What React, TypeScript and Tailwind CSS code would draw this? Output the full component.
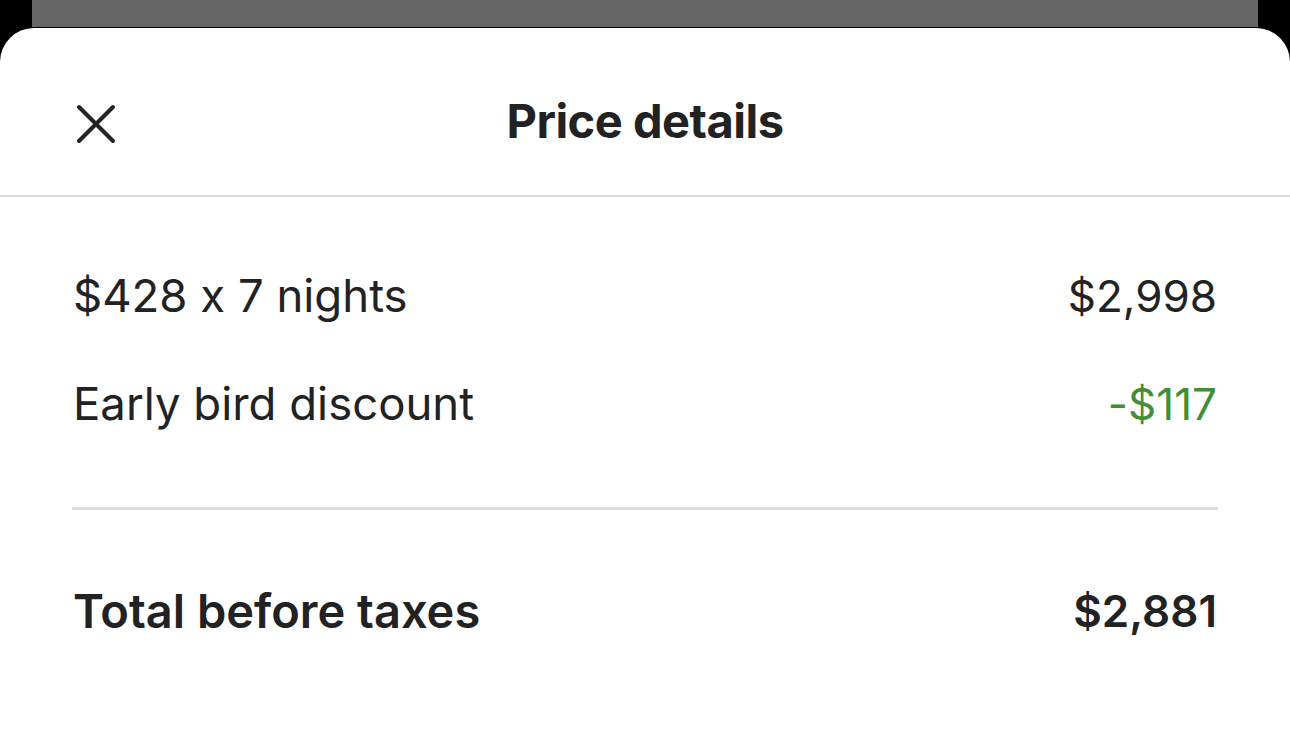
import React from "react";

export default function App() {
  return (
    <div
      className="h-[738px] w-[1290px] bg-black overflow-hidden flex flex-col text-[#222222] [font-feature-settings:'calt'_0]"
      style={{ fontFamily: 'Inter, "Noto Sans", sans-serif' }}
    >
      <div className="mx-[32px] h-[27px] shrink-0 bg-[#666666]" />
      <div className="mt-px flex-1 bg-white rounded-t-[34px] flex flex-col">
        <div className="relative h-[169px] shrink-0 border-b-2 border-[#dddddd] flex items-center justify-center pt-[20px]">
          <button className="absolute left-[76px] top-[76px] w-[40px] h-[40px] flex items-center justify-center">
            <svg width="40" height="40" viewBox="0 0 40 40" fill="none">
              <path d="M3 3L37 37M37 3L3 37" stroke="#222222" strokeWidth="4" strokeLinecap="round" />
            </svg>
          </button>
          <h1 className="text-[47px] font-bold tracking-[-0.5px]">Price details</h1>
        </div>
        <div className="px-[73px] pt-[45px] flex flex-col">
          <div className="h-[108px] flex items-center justify-between text-[45.5px]">
            <span>$428 x 7 nights</span>
            <span className="text-[44px]">$2,998</span>
          </div>
          <div className="h-[108px] flex items-center justify-between text-[45.5px]">
            <span>Early bird discount</span>
            <span className="text-[44px] text-[#3f8f37]">-$117</span>
          </div>
          <div className="mt-[49px] h-[3px] bg-[#dddddd] -mx-px" />
          <div className="mt-[47px] h-[108px] flex items-center justify-between font-semibold">
            <span className="text-[47px]">Total before taxes</span>
            <span className="text-[44px]">$2,881</span>
          </div>
        </div>
      </div>
    </div>
  );
}
